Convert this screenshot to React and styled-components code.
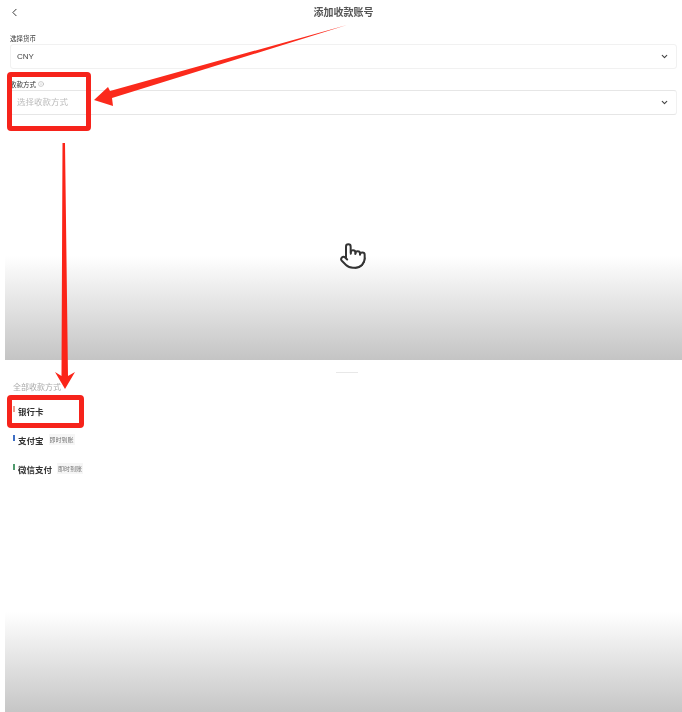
import styled, { createGlobalStyle } from 'styled-components';
import { ChevronLeft, ChevronDown, Info, Pointer } from 'lucide-react';

const methods = [
    { name: '银行卡', color: '#e8a090' },
    { name: '支付宝', color: '#3f6fc4', tag: '即时到账' },
    { name: '微信支付', color: '#4f9a6c', tag: '即时到账' },
];

export default function App() {
    return (
        <Page>
            <GlobalStyle />
            <TopPanel>
                <Header>
                    <BackButton><ChevronLeft size={13} strokeWidth={1.8} /></BackButton>
                    <Title>添加收款账号</Title>
                </Header>
                <Label>选择货币</Label>
                <Select>
                    <SelectValue>CNY</SelectValue>
                    <ChevronDown size={9} strokeWidth={3} color="#444" />
                </Select>
                <Label $gap>
                    收款方式 <Info size={6} strokeWidth={1.5} color="#888" />
                </Label>
                <Select $shaded>
                    <SelectValue $placeholder>选择收款方式</SelectValue>
                    <ChevronDown size={9} strokeWidth={3} color="#444" />
                </Select>
                <HandSlot>
                    <Pointer size={28} strokeWidth={1.7} color="#333" fill="#fff" />
                </HandSlot>
            </TopPanel>
            <BottomPanel>
                <Handle />
                <SheetTitle>全部收款方式</SheetTitle>
                {methods.map(m => (
                    <MethodRow key={m.name}>
                        <Mark $color={m.color} />
                        <MethodName>{m.name}</MethodName>
                        {m.tag && <Tag>{m.tag}</Tag>}
                    </MethodRow>
                ))}
            </BottomPanel>

            <RedBox $left={7} $top={72} $width={84} $height={59} />
            <RedBox $left={7} $top={395} $width={77} $height={33} />
            <Arrows viewBox="0 0 682 712">
                <polygon points="347,25 112,98 113,106 94,100 108,87 110,91" fill="#fb2a1c" />
                <polygon points="62.5,143 65,143 68,376 75,372 65,389 55,372 61.5,376" fill="#fb2418" />
            </Arrows>
        </Page>
    );
}

const GlobalStyle = createGlobalStyle`
    html, body {
        margin: 0;
        padding: 0;
        background: #fff;
    }
    body {
        font-family: "Liberation Sans", "Noto Sans CJK SC", sans-serif;
    }
`;

const Page = styled.div`
    position: relative;
    width: 682px;
    height: 712px;
    overflow: hidden;
    padding-left: 5px;
    box-sizing: border-box;
`;

const TopPanel = styled.section`
    display: flex;
    flex-direction: column;
    box-sizing: border-box;
    height: 360px;
    padding: 0 5px;
    background: linear-gradient(#fff 0, #fff 256px, #c4c4c4 360px);
`;

const Header = styled.header`
    display: flex;
    align-items: center;
    justify-content: center;
    position: relative;
    height: 24px;
    margin-bottom: 7px;
`;

const BackButton = styled.span`
    position: absolute;
    left: -2px;
    top: 6px;
    display: flex;
    color: #333;
`;

const Title = styled.h1`
    margin: 0 0 2px;
    font-size: 10px;
    font-weight: 700;
    color: #555;
    filter: blur(0.4px);
`;

const Label = styled.div`
    display: flex;
    align-items: center;
    gap: 2px;
    height: 13px;
    margin-top: ${props => (props.$gap ? '8px' : '0')};
    font-size: 6.5px;
    color: #333;
    filter: blur(0.3px);
`;

const Select = styled.div`
    display: flex;
    align-items: center;
    justify-content: space-between;
    box-sizing: border-box;
    height: 25px;
    padding: 0 7px 0 6px;
    background: #fff;
    border: 1px solid #f1f1f1;
    border-top-color: ${props => (props.$shaded ? '#e6e6e6' : '#f1f1f1')};
    border-bottom-color: ${props => (props.$shaded ? '#e6e6e6' : '#f1f1f1')};
    border-radius: 3px;
`;

const SelectValue = styled.span`
    margin-bottom: ${props => (props.$placeholder ? '3px' : '0')};
    font-size: ${props => (props.$placeholder ? '8.5px' : '8px')};
    color: ${props => (props.$placeholder ? '#bbb' : '#444')};
    filter: blur(0.4px);
`;

const HandSlot = styled.div`
    display: flex;
    justify-content: center;
    margin-top: 127px;
    padding-left: 18px;
`;

const BottomPanel = styled.section`
    position: relative;
    box-sizing: border-box;
    height: 352px;
    padding: 21px 0 0 8px;
    background: linear-gradient(#fff 0, #fff 252px, #c6c6c6 352px);
`;

const Handle = styled.div`
    position: absolute;
    top: 12px;
    left: 331px;
    width: 22px;
    height: 1px;
    background: #e8e8e8;
`;

const SheetTitle = styled.div`
    height: 13px;
    margin-bottom: 2px;
    font-size: 8px;
    line-height: 13px;
    color: #aaa;
    filter: blur(0.3px);
`;

const MethodRow = styled.div`
    display: flex;
    align-items: center;
    height: 29px;
`;

const Mark = styled.span`
    width: 2px;
    height: 6px;
    margin: -4px 3px 0 0;
    background: ${props => props.$color};
`;

const MethodName = styled.span`
    font-size: 8.5px;
    font-weight: 700;
    color: #333;
    filter: blur(0.3px);
`;

const Tag = styled.span`
    margin-left: 5px;
    padding: 1px;
    font-size: 6px;
    color: #777;
    background: #f6f6f6;
    filter: blur(0.4px);
`;

const RedBox = styled.div`
    position: absolute;
    left: ${props => props.$left}px;
    top: ${props => props.$top}px;
    width: ${props => props.$width}px;
    height: ${props => props.$height}px;
    box-sizing: border-box;
    border: 5px solid #f6231b;
    border-radius: 4px;
`;

const Arrows = styled.svg`
    position: absolute;
    inset: 0;
    width: 682px;
    height: 712px;
    pointer-events: none;
`;
